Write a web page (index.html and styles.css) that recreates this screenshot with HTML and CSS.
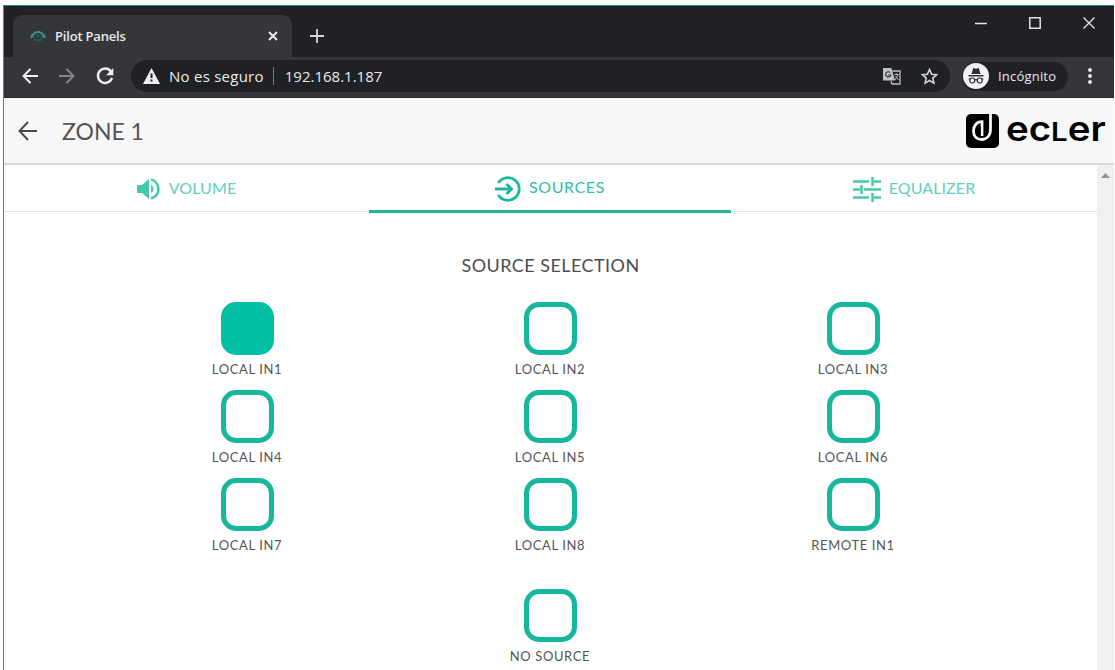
FILE: index.html
```html
<!DOCTYPE html>
<html lang="es">
<head>
  <meta charset="utf-8">
  <title>Pilot Panels</title>
  <link rel="stylesheet" href="styles.css">
</head>
<body>
  <div class="window">
    <div class="titlebar">
      <div class="browser-tab">
        <svg class="favicon" width="16" height="12" viewBox="0 0 16 12">
          <path d="M1 8C3 3 5 2 8 2s5 1 7 6" fill="none" stroke="#3d9482" stroke-width="2.2"/>
          <path d="M8 4v4M3 8l2-2M13 8l-2-2M4 10h8" fill="none" stroke="#1f6b5b" stroke-width="1.500"/>
        </svg>
        <span class="tab-title">Pilot Panels</span>
        <svg class="tab-close" width="10" height="10" viewBox="0 0 10 10"><path d="M1 1l8 8M9 1l-8 8" stroke="#e8eaed" stroke-width="2"/></svg>
      </div>
      <svg class="new-tab" width="14" height="14" viewBox="0 0 14 14"><path d="M7 0v14M0 7h14" stroke="#d5d7da" stroke-width="1.8"/></svg>
      <div class="window-buttons">
        <svg width="12" height="12" viewBox="0 0 12 12"><path d="M0 6.500h12" stroke="#e4e4e4" stroke-width="1.5"/></svg>
        <svg width="12" height="12" viewBox="0 0 12 12"><path d="M.8.800h10.400v10.400H.8z" fill="none" stroke="#e4e4e4" stroke-width="1.500"/></svg>
        <svg width="12" height="12" viewBox="0 0 12 12"><path d="M.5.500l11 11M11.500.500l-11 11" stroke="#e4e4e4" stroke-width="1.400"/></svg>
      </div>
    </div>

    <div class="toolbar">
      <svg class="nav-btn" width="16" height="16" viewBox="0 0 16 16"><path d="M16 8H2M8.500 1L1.500 8l7 7" fill="none" stroke="#eceef0" stroke-width="2"/></svg>
      <svg class="nav-btn" width="16" height="16" viewBox="0 0 16 16"><path d="M0 8h14M7.500 1l7 7-7 7" fill="none" stroke="#85878a" stroke-width="1.900"/></svg>
      <svg class="nav-btn" width="18" height="18" viewBox="0 0 18 18"><path d="M15 4.500A7.200 7.200 0 1 0 16 11" fill="none" stroke="#eceef0" stroke-width="2.400"/><path d="M17.300 1v7.200h-7.200z" fill="#eceef0"/></svg>
      <div class="address-bar">
        <svg width="17" height="16" viewBox="0 0 17 16"><path d="M8.500 0L17 16H0z" fill="#eceef0"/><path d="M8.500 5.500v4.500M8.500 11.500v2" stroke="#202124" stroke-width="2"/></svg>
        <span class="security">No es seguro</span>
        <span class="url">192.168.1.187</span>
        <svg class="translate" width="18" height="18" viewBox="0 0 18 18">
          <path d="M0 1h8.500l3.500 12.500H0z" fill="#bdc1c6"/>
          <path d="M9.500 4H17v13H9l-1-3" fill="none" stroke="#bdc1c6" stroke-width="1.300"/>
          <path d="M7.300 5.700a2.600 2.600 0 1 0 .5 2.300H5.300" fill="none" stroke="#35363a" stroke-width="1.200"/>
          <path d="M11.500 7.500h4M13.500 6.500v1M15 8l-3.200 5M12.500 9l3 4" fill="none" stroke="#bdc1c6"/>
        </svg>
        <svg width="17" height="17" viewBox="0 0 17 17"><path d="M8.500 1.500l2.100 4.700 5 .5-3.800 3.400 1.100 5-4.400-2.600-4.400 2.600 1.100-5L1.400 6.700l5-.5z" fill="none" stroke="#d0d3d6" stroke-width="1.600"/></svg>
      </div>
      <div class="incognito">
        <svg width="26" height="26" viewBox="0 0 26 26">
          <circle cx="13" cy="13" r="13" fill="#f1f3f4"/>
          <path d="M8.500 11l1.700-6 2.800.7 2.800-.7 1.700 6zM5.500 12h15v1.500h-15z" fill="#303134"/>
          <g fill="none" stroke="#303134" stroke-width="1.200"><circle cx="9.300" cy="17.500" r="2.500"/><circle cx="16.700" cy="17.500" r="2.500"/><path d="M11.800 17q1.200-.8 2.400 0M5.500 16h2M18.500 16h2"/></g>
        </svg>
        <span>Incógnito</span>
      </div>
      <svg width="4" height="16" viewBox="0 0 4 16"><g fill="#e8eaed"><circle cx="2" cy="2" r="1.900"/><circle cx="2" cy="8" r="1.900"/><circle cx="2" cy="14" r="1.900"/></g></svg>
    </div>

    <header class="app-header">
      <svg width="19" height="20" viewBox="0 0 19 20"><path d="M19 10H2M10 1L1.500 10l8.500 9" fill="none" stroke="#484848" stroke-width="1.900"/></svg>
      <h1>ZONE 1</h1>
      <div class="brand">
        <svg width="33" height="34" viewBox="0 0 33 34">
          <rect width="33" height="34" rx="5" fill="#000"/>
          <path d="M24.500 0v15c0 7-4 10.500-9 10.500-5.500 0-8-4-8-8.500 0-5 3-9.300 8.500-9.300V22" fill="none" stroke="#f7f7f7" stroke-width="2.800"/>
          <path d="M14.700 12.500v9q-4-1-4-4.500t4-4.500z" fill="#000"/>
        </svg>
        <span class="wordmark">ec<span class="low-l">l</span>er</span>
      </div>
    </header>

    <div class="content">
      <main>
        <nav class="tabs">
          <div class="tab">
            <svg width="24" height="24" viewBox="0 0 24 24"><path d="M0 8v8h5l7 6V2L5 8z" fill="#45c9ad"/><path d="M14 7.500q5 4.500 0 9z" fill="#45c9ad"/><path d="M14 2.500a9.800 9.800 0 0 1 0 19" fill="none" stroke="#45c9ad" stroke-width="2.700"/></svg>
            <span>VOLUME</span>
          </div>
          <div class="tab active">
            <svg width="26" height="26" viewBox="0 0 26 26"><path d="M3.300 7A11.300 11.300 0 1 1 3.300 19" fill="none" stroke="#1fb89e" stroke-width="2.800"/><path d="M0 13h16M11.500 8l5 5-5 5" fill="none" stroke="#1fb89e" stroke-width="2.900"/></svg>
            <span>SOURCES</span>
          </div>
          <div class="tab">
            <svg width="28" height="27" viewBox="0 0 28 27"><path d="M0 5.500h16M19 5.500h9M0 13.500h7M11 13.500h17M0 21.500h16M19 21.500h9M19.500 1v9M8.500 9v9M19.500 17v9" fill="none" stroke="#45c9ad" stroke-width="2.500"/></svg>
            <span>EQUALIZER</span>
          </div>
        </nav>

        <h2>SOURCE SELECTION</h2>
        <div class="sources">
          <div class="source selected"><i class="box"></i><span>LOCAL IN1</span></div>
          <div class="source"><i class="box"></i><span>LOCAL IN2</span></div>
          <div class="source"><i class="box"></i><span>LOCAL IN3</span></div>
          <div class="source"><i class="box"></i><span>LOCAL IN4</span></div>
          <div class="source"><i class="box"></i><span>LOCAL IN5</span></div>
          <div class="source"><i class="box"></i><span>LOCAL IN6</span></div>
          <div class="source"><i class="box"></i><span>LOCAL IN7</span></div>
          <div class="source"><i class="box"></i><span>LOCAL IN8</span></div>
          <div class="source"><i class="box"></i><span>REMOTE IN1</span></div>
          <div class="source none"><i class="box"></i><span>NO SOURCE</span></div>
        </div>
      </main>
      <div class="scrollbar"><svg width="9" height="5" viewBox="0 0 9 5"><path d="M0 5L4.500 0 9 5z" fill="#909090"/></svg></div>
    </div>
  </div>
</body>
</html>
```
FILE: styles.css
```css
* {
  box-sizing: border-box;
}

body {
  margin: 0;
  height: 670px;
  padding: 5px 1px 0 3px;
  background: #fff;
  overflow: hidden;
  font-family: Lato, "Open Sans", sans-serif;
}

svg {
  display: block;
  flex: none;
}

span {
  white-space: nowrap;
}

.window {
  height: 665px;
  display: flex;
  flex-direction: column;
  border-left: 1px solid #777;
  border-top: 1px solid #268b94;
}

/* browser frame */
.titlebar {
  height: 51px;
  flex: none;
  display: flex;
  background: #202124;
  padding: 9px 19px 0 9px;
}

.browser-tab {
  width: 279px;
  height: 42px;
  display: flex;
  align-items: center;
  padding: 0 14px 0 17px;
  background: #35363a;
  border-radius: 9px 9px 0 0;
  font: 600 13px "Open Sans", sans-serif;
  color: #e8eaed;
}

.tab-title {
  margin-left: 9px;
  letter-spacing: -0.2px;
}

.tab-close {
  margin-left: auto;
}

.new-tab {
  margin: 14px 0 0 18px;
}

.window-buttons {
  margin: 2px 0 0 auto;
  display: flex;
  gap: 42px;
}

.toolbar {
  height: 41px;
  flex: none;
  display: flex;
  align-items: center;
  background: #35363a;
  border-bottom: 1px solid #29292b;
  padding: 0 22px 2px 18px;
  color: #e8eaed;
  font: 15px "Open Sans", sans-serif;
}

.nav-btn {
  margin-right: 21px;
}

.nav-btn + .nav-btn + .nav-btn {
  margin-right: 17px;
}

.address-bar {
  width: 819px;
  height: 32px;
  display: flex;
  align-items: center;
  background: #202124;
  border-radius: 16px;
  padding: 0 12px;
}

.security {
  margin-left: 9px;
  padding-right: 9px;
  border-right: 1px solid #77797c;
  line-height: 18px;
  letter-spacing: 0.25px;
}

.url {
  margin-left: 11px;
}

.translate {
  margin-left: auto;
  margin-right: 20px;
}

.incognito {
  width: 106px;
  height: 29px;
  margin: 0 20px 0 12px;
  display: flex;
  align-items: center;
  gap: 9px;
  padding-left: 1px;
  background: #202124;
  border-radius: 15px;
  font-size: 13px;
  letter-spacing: 0.2px;
}

/* panel header */
.app-header {
  height: 67px;
  flex: none;
  display: flex;
  align-items: center;
  background: #f7f7f7;
  border-bottom: 2px solid #dadada;
  padding: 0 8px 0 14px;
}

h1 {
  margin: 0 0 0 25px;
  font-size: 23px;
  font-weight: 400;
  color: #555;
}

.brand {
  margin-left: auto;
  display: flex;
  align-items: center;
  gap: 7px;
}

.wordmark {
  width: 100px;
  height: 34px;
  font: 600 34px/30px Inter, sans-serif;
  transform: scaleX(1.13);
  transform-origin: left;
}

/* the l of the brand name is only as high as the e */
.low-l {
  font-size: 26px;
  text-transform: uppercase;
}

.content {
  flex: 1;
  display: flex;
  min-height: 0;
}

main {
  width: 1093px;
}

.tabs {
  height: 47px;
  display: grid;
  grid-template-columns: 365px 362px 366px;
  border-bottom: 1px solid #e4e4e4;
}

.tab {
  height: 48px;
  display: flex;
  align-items: center;
  justify-content: center;
  gap: 8px;
  color: #5fd0b9;
  font-size: 16px;
  letter-spacing: 0.1px;
}

.tab span {
  padding-bottom: 4px;
}

.active {
  padding-top: 2px;
  color: #35bda5;
  border-bottom: 3px solid #1fb49b;
  letter-spacing: 0.6px;
}

h2 {
  margin: 41px 0 0;
  height: 24px;
  text-align: center;
  font-size: 18px;
  line-height: 24px;
  font-weight: 400;
  letter-spacing: 0.45px;
  color: #4d4d4d;
}

.sources {
  width: 909px;
  margin: 25px auto 0;
  display: grid;
  grid-template-columns: repeat(3, 303px);
  grid-auto-rows: 88px;
}

.source {
  display: flex;
  flex-direction: column;
  align-items: center;
  padding-right: 1px;
  font-size: 13px;
  line-height: 20px;
  letter-spacing: 0.6px;
  color: #555;
}

.box {
  width: 53px;
  height: 53px;
  flex: none;
  margin-bottom: 4px;
  border: 5px solid #17b79c;
  border-radius: 15px;
}

.selected .box {
  background: #05bfa4;
  border-color: #05bfa4;
}

.none {
  grid-column: 2;
  margin-top: 23px;
}

.scrollbar {
  flex: 1;
  padding: 8px 0 0 4px;
  background: #f0f0f0;
}
```
